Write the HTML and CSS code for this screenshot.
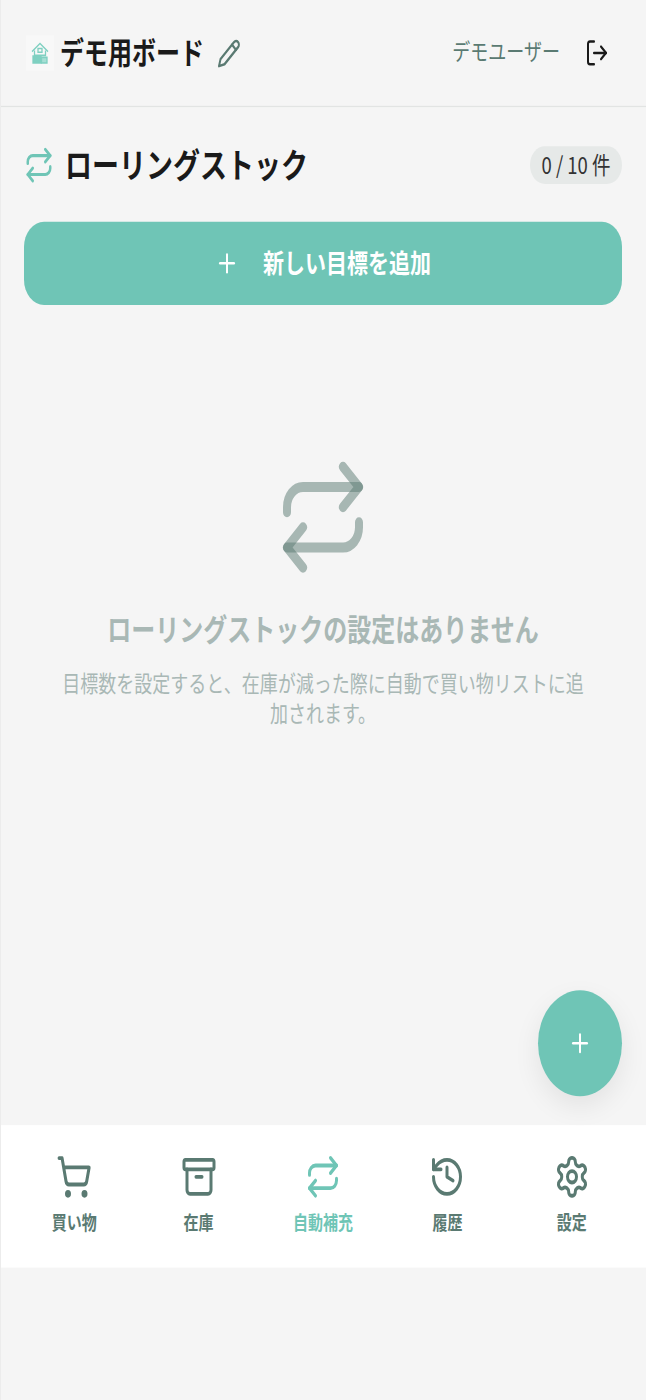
FILE: index.html
```html
<!DOCTYPE html>
<html lang="ja">
<head>
    <meta charset="UTF-8">
    <meta name="viewport" content="width=device-width, initial-scale=1.0">
    <title>ローリングストック</title>
    <link rel="stylesheet" href="styles.css">
</head>
<body>
    <div class="app">
        <header class="top-bar">
            <div class="board">
                <span class="board-logo">
                    <svg viewBox="0 0 28 28" width="28" height="28" fill="none" stroke="#7fd0c1" stroke-width="1.300">
                        <path d="M6 13 14 6.500 22 13"/>
                        <path d="M8.500 12v4h11v-4"/>
                        <path d="M12 10.500h4v3h-4z"/>
                        <path d="M7 16.500h8v5.500H7z" fill="#7fd0c1"/>
                        <path d="M15.500 17.500h5.500v4.500h-5.500z" fill="#a6dfd4"/>
                    </svg>
                </span>
                <span class="board-name">デモ用ボード</span>
                <svg class="icon edit-icon" viewBox="0 0 24 24">
                    <path d="M17 3a2.830 2.830 0 1 1 4 4L7.500 20.500 2 22l1.500-5.500z"/>
                    <path d="m15 5 4 4"/>
                </svg>
            </div>
            <div class="user">
                <span class="user-name">デモユーザー</span>
                <svg class="icon logout-icon" viewBox="0 0 24 24">
                    <path d="M9 21H5a2 2 0 0 1-2-2V5a2 2 0 0 1 2-2h4"/>
                    <path d="m16 17 5-5-5-5"/>
                    <path d="M21 12H9"/>
                </svg>
            </div>
        </header>

        <main class="content">
            <div class="section-head">
                <h1 class="section-title">
                    <svg class="icon section-icon" viewBox="0 0 24 24">
                        <path d="m17 2 4 4-4 4"/>
                        <path d="M3 11v-1a4 4 0 0 1 4-4h14"/>
                        <path d="m7 22-4-4 4-4"/>
                        <path d="M21 13v1a4 4 0 0 1-4 4H3"/>
                    </svg>
                    <span class="section-name">ローリングストック</span>
                </h1>
                <span class="count-badge"><span class="count-text">0 / 10 件</span></span>
            </div>

            <button class="add-goal">
                <svg class="icon plus-icon" viewBox="0 0 24 24">
                    <path d="M5 12h14"/>
                    <path d="M12 5v14"/>
                </svg>
                <span class="add-goal-text">新しい目標を追加</span>
            </button>

            <div class="empty">
                <svg class="icon empty-icon" viewBox="0 0 24 24">
                    <path d="m17 2 4 4-4 4"/>
                    <path d="M3 11v-1a4 4 0 0 1 4-4h14"/>
                    <path d="m7 22-4-4 4-4"/>
                    <path d="M21 13v1a4 4 0 0 1-4 4H3"/>
                </svg>
                <h2 class="empty-title">ローリングストックの設定はありません</h2>
                <p class="empty-text">目標数を設定すると、在庫が減った際に自動で買い物リストに追加されます。</p>
            </div>
        </main>

        <button class="fab">
            <svg class="icon fab-icon" viewBox="0 0 24 24">
                <path d="M5 12h14"/>
                <path d="M12 5v14"/>
            </svg>
        </button>

        <nav class="tabs">
            <a class="tab">
                <svg class="icon tab-icon" viewBox="0 0 24 24">
                    <circle cx="8" cy="21" r="1"/>
                    <circle cx="19" cy="21" r="1"/>
                    <path d="M2.050 2.050h2l2.660 12.420a2 2 0 0 0 2 1.580h9.780a2 2 0 0 0 1.950-1.570l1.650-7.430H5.120"/>
                </svg>
                買い物
            </a>
            <a class="tab">
                <svg class="icon tab-icon" viewBox="0 0 24 24">
                    <rect x="2" y="3" width="20" height="5" rx="1"/>
                    <path d="M4 8v11a2 2 0 0 0 2 2h12a2 2 0 0 0 2-2V8"/>
                    <path d="M10 12h4"/>
                </svg>
                在庫
            </a>
            <a class="tab active">
                <svg class="icon tab-icon" viewBox="0 0 24 24">
                    <path d="m17 2 4 4-4 4"/>
                    <path d="M3 11v-1a4 4 0 0 1 4-4h14"/>
                    <path d="m7 22-4-4 4-4"/>
                    <path d="M21 13v1a4 4 0 0 1-4 4H3"/>
                </svg>
                自動補充
            </a>
            <a class="tab">
                <svg class="icon tab-icon" viewBox="0 0 24 24">
                    <path d="M3 12a9 9 0 1 0 9-9 9.750 9.750 0 0 0-6.740 2.740L3 8"/>
                    <path d="M3 3v5h5"/>
                    <path d="M12 7v5l4 2"/>
                </svg>
                履歴
            </a>
            <a class="tab">
                <svg class="icon tab-icon" viewBox="0 0 24 24">
                    <path d="M12.220 2h-.44a2 2 0 0 0-2 2v.18a2 2 0 0 1-1 1.730l-.43.25a2 2 0 0 1-2 0l-.15-.08a2 2 0 0 0-2.730.73l-.22.38a2 2 0 0 0 .73 2.730l.15.1a2 2 0 0 1 1 1.720v.51a2 2 0 0 1-1 1.740l-.15.09a2 2 0 0 0-.73 2.730l.22.38a2 2 0 0 0 2.730.73l.15-.08a2 2 0 0 1 2 0l.43.25a2 2 0 0 1 1 1.730V20a2 2 0 0 0 2 2h.44a2 2 0 0 0 2-2v-.18a2 2 0 0 1 1-1.730l.43-.25a2 2 0 0 1 2 0l.15.08a2 2 0 0 0 2.730-.73l.22-.39a2 2 0 0 0-.73-2.730l-.15-.08a2 2 0 0 1-1-1.740v-.5a2 2 0 0 1 1-1.740l.15-.09a2 2 0 0 0 .73-2.730l-.22-.38a2 2 0 0 0-2.730-.73l-.15.08a2 2 0 0 1-2 0l-.43-.25a2 2 0 0 1-1-1.730V4a2 2 0 0 0-2-2z"/>
                    <circle cx="12" cy="12" r="3"/>
                </svg>
                設定
            </a>
        </nav>
    </div>
</body>
</html>
```

FILE: styles.css
```css
* {
    margin: 0;
    padding: 0;
    box-sizing: border-box;
    font-family: "Noto Sans CJK JP", "Noto Sans", sans-serif;
}

html, body {
    height: 1400px;
    overflow: hidden;
    background-color: #f5f5f5;
}

/* the whole screen is drawn 1.26x taller than wide */
.app {
    position: relative;
    display: flex;
    flex-direction: column;
    width: 646px;
    height: 1111px;
    border-left: 1px solid #ececec;
    transform: scaleY(1.26);
    transform-origin: top left;
}

.icon {
    fill: none;
    stroke: currentColor;
    stroke-width: 2;
    stroke-linecap: round;
    stroke-linejoin: round;
    flex-shrink: 0;
}

.top-bar {
    display: flex;
    align-items: center;
    justify-content: space-between;
    height: 85px;
    padding: 0 37px 0 25px;
    border-bottom: 1.500px solid #e2e4e3;
}

.board {
    display: flex;
    align-items: center;
}

.board-logo {
    display: flex;
    width: 28px;
    height: 28px;
    margin-right: 6px;
    background-color: #f8f8f8;
}

.board-name {
    margin-bottom: 4px;
    font-size: 24px;
    font-weight: 700;
    color: #1a1a1a;
}

.edit-icon {
    width: 24px;
    height: 25px;
    margin-left: 13px;
    color: #5a7a72;
}

.user {
    display: flex;
    align-items: center;
    gap: 25px;
}

.user-name {
    margin-bottom: 4px;
    font-size: 18px;
    color: #5a7a72;
}

.logout-icon {
    width: 24px;
    height: 24px;
    color: #1a1a1a;
}

.content {
    flex: 1;
    padding: 31px 24px 0 23px;
}

.section-head {
    display: flex;
    align-items: center;
    justify-content: space-between;
    height: 30px;
}

.section-title {
    display: flex;
    align-items: center;
    gap: 11px;
    font-size: 27px;
    font-weight: 700;
    color: #1a1a1a;
}

.section-name {
    margin-bottom: 4px;
}

.section-icon {
    width: 30px;
    height: 30px;
    color: #6fc5b6;
}

.count-badge {
    display: flex;
    align-items: center;
    height: 30px;
    padding: 0 11.500px;
    border-radius: 15px;
    background-color: #e6e9e8;
    font-size: 18.500px;
    color: #333;
}

.count-text {
    margin-bottom: 3px;
}

.add-goal {
    display: flex;
    align-items: center;
    justify-content: center;
    gap: 24px;
    width: 100%;
    height: 66px;
    margin-top: 30px;
    border: none;
    border-radius: 20px;
    background-color: #6fc5b6;
    color: #fff;
    font-size: 21px;
    font-weight: 700;
}

.add-goal-text {
    margin-bottom: 3px;
}

.plus-icon {
    width: 24px;
    height: 24px;
}

.empty {
    display: flex;
    flex-direction: column;
    align-items: center;
    margin-top: 120px;
    padding: 0 32px;
    text-align: center;
}

.empty-icon {
    width: 96px;
    height: 97px;
    color: #5a7a72;
    stroke-opacity: 0.5;
}

.empty-title {
    margin-top: 22px;
    font-size: 24px;
    font-weight: 700;
    color: #a9b8b5;
}

.empty-text {
    margin-top: 13px;
    font-size: 18px;
    line-height: 24px;
    color: #a9b8b5;
}

.fab {
    position: absolute;
    right: 24px;
    top: 786px;
    z-index: 2;
    display: flex;
    align-items: center;
    justify-content: center;
    width: 84px;
    height: 84px;
    border: none;
    border-radius: 50%;
    background-color: #6fc5b6;
    color: #fff;
    box-shadow: 0 8px 24px rgba(0, 0, 0, 0.08);
}

.fab-icon {
    width: 24px;
    height: 24px;
}

.tabs {
    display: flex;
    height: 113px;
    margin-bottom: 105px;
    padding: 23px 12px 0 11px;
    background-color: #fff;
}

.tab {
    flex: 1;
    display: flex;
    flex-direction: column;
    align-items: center;
    font-size: 15px;
    font-weight: 700;
    line-height: 20px;
    color: #5a7a72;
}

.tab.active {
    color: #6fc5b6;
}

.tab-icon {
    width: 36px;
    height: 36px;
    margin-bottom: 8px;
}
```
